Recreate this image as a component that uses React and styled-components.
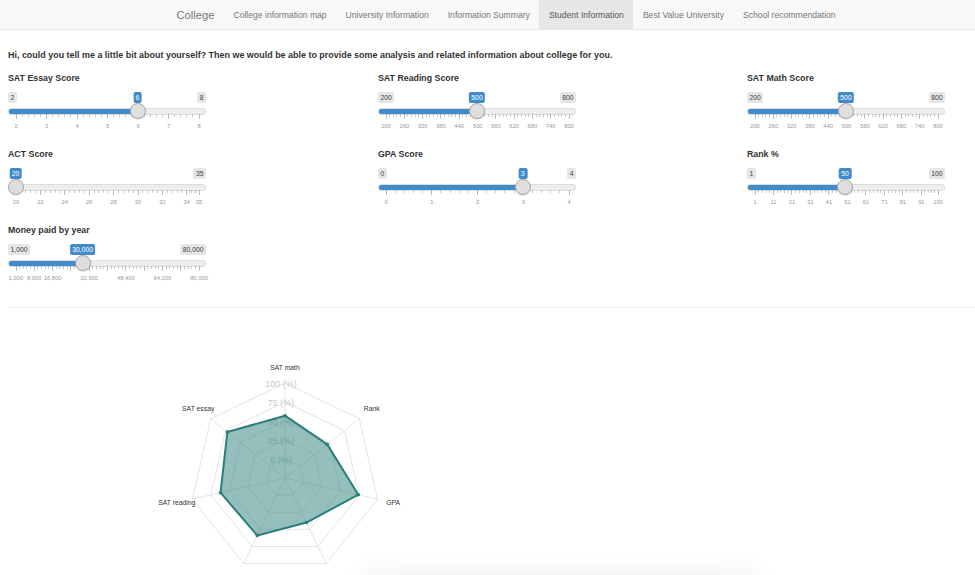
import React from 'react'
import styled, { createGlobalStyle } from 'styled-components'

const GlobalStyle = createGlobalStyle`
    body {
        margin: 0;
        background: #fff;
        font-family: "Liberation Sans", Arial, sans-serif;
        color: #333;
    }
`

// Navbar
const Navbar = styled.nav`
    height: 29px;
    background: #f8f8f8;
    border-bottom: 1px solid #e7e7e7;
    display: flex;
    align-items: stretch;
    padding-left: 167px;
`
const Brand = styled.div`
    font-size: 11.2px;
    color: #777;
    padding: 0 9.5px;
    display: flex;
    align-items: center;
`
const NavLink = styled.div`
    font-size: 8.6px;
    padding: 0 9.5px;
    display: flex;
    align-items: center;
    background: ${p => (p.$active ? '#e7e7e7' : 'transparent')};
    color: ${p => (p.$active ? '#555' : '#777')};
`

// Page
const Main = styled.main`
    padding: 0 8px;
`
const Intro = styled.p`
    margin: 19px 0 11px;
    font-size: 8.95px;
    line-height: 12px;
    font-weight: bold;
    color: #333;
`
const InputGrid = styled.div`
    display: grid;
    grid-template-columns: 370px 369px 1fr;
`
const Group = styled.div`
    height: 76px;
`
const Label = styled.div`
    font-size: 8.8px;
    line-height: 12px;
    font-weight: bold;
    color: #333;
    margin-bottom: 7px;
`
const Rule = styled.hr`
    border: 0;
    border-top: 1px solid #eee;
    margin: 7px -8px 0 0;
`

// Slider (ion.rangeSlider, shiny skin)
const Track = styled.div`
    position: relative;
    width: 198px;
    height: 40px;
`
const EdgeTag = styled.span`
    position: absolute;
    top: 1px;
    ${p => (p.$side === 'left' ? 'left: 0;' : 'right: 0;')}
    font-size: 6.8px;
    line-height: 11px;
    padding: 0 2.5px;
    border-radius: 2px;
    background: rgba(0, 0, 0, 0.1);
    color: #444;
`
const ValueTag = styled.span`
    position: absolute;
    top: 1px;
    transform: translateX(-50%);
    font-size: 6.8px;
    line-height: 11px;
    padding: 0 2.5px;
    border-radius: 2px;
    background: #428bca;
    color: #fff;
    white-space: nowrap;
`
const Line = styled.div`
    position: absolute;
    top: 17px;
    left: 0;
    right: 0;
    height: 5px;
    border-radius: 3px;
    background: #ededed;
    border: 0.5px solid #ddd;
    overflow: hidden;
`
const Fill = styled.div`
    height: 100%;
    background: #428bca;
`
const Handle = styled.div`
    position: absolute;
    top: 12px;
    width: 16px;
    height: 16px;
    margin-left: -8.5px;
    border-radius: 50%;
    box-sizing: border-box;
    background: #dedede;
    border: 1px solid #aaa;
    box-shadow: 0 0.5px 1px rgba(0, 0, 0, 0.15);
`
const Tick = styled.span`
    position: absolute;
    top: 23px;
    width: 1px;
    height: ${p => (p.$big ? '5px' : '2.5px')};
    background: ${p => (p.$big ? '#428bca' : '#999')};
    opacity: 0.5;
`
const TickLabel = styled.span`
    position: absolute;
    top: 31px;
    transform: translateX(-50%);
    font-size: 5.8px;
    line-height: 8px;
    color: #999;
    white-space: nowrap;
`

const fmt = n => n.toLocaleString('en-US')

const Slider = ({ min, max, value, ticks, labels }) => {
    const pos = v => 7.5 + ((v - min) / (max - min)) * 183
    const shown = labels || ticks
    const small = []
    for (let i = 0; i < ticks.length - 1; i++) {
        const a = pos(ticks[i])
        const b = pos(ticks[i + 1])
        const n = b - a < 10 ? 1 : 4
        for (let j = 1; j <= n; j++) small.push(a + ((b - a) / (n + 1)) * j)
    }
    // ion.rangeSlider hides the edge labels that the value label covers
    const valueHalf = (String(fmt(value)).length * 3.8 + 5) / 2
    const minWidth = String(fmt(min)).length * 3.8 + 5
    const maxWidth = String(fmt(max)).length * 3.8 + 5
    const showMin = pos(value) - valueHalf > minWidth + 1
    const showMax = pos(value) + valueHalf < 198 - maxWidth - 1
    return (
        <Track>
            {showMin && <EdgeTag $side="left">{fmt(min)}</EdgeTag>}
            {showMax && <EdgeTag $side="right">{fmt(max)}</EdgeTag>}
            <ValueTag style={{ left: pos(value) }}>{fmt(value)}</ValueTag>
            <Line>
                <Fill style={{ width: pos(value) }} />
            </Line>
            {ticks.map(t => (
                <Tick key={'b' + t} $big style={{ left: pos(t) }} />
            ))}
            {small.map((x, i) => (
                <Tick key={'s' + i} style={{ left: x }} />
            ))}
            {shown.map(t => (
                <TickLabel key={'l' + t} style={{ left: pos(t) + 0.5 }}>{fmt(t)}</TickLabel>
            ))}
            <Handle style={{ left: pos(value) + 0.5 }} />
        </Track>
    )
}

const range = (a, b, s) => {
    const out = []
    for (let v = a; v <= b + 1e-9; v += s) out.push(Math.round(v * 100) / 100)
    return out
}

// Radar chart
const ChartBox = styled.div`
    height: 267px;
    overflow: hidden;
`
const Shadow = styled.div`
    position: fixed;
    left: 370px;
    bottom: -34px;
    width: 380px;
    height: 24px;
    border-radius: 12px;
    background: #ececec;
    box-shadow: 0 0 28px 14px rgba(0, 0, 0, 0.06);
`

const CX = 285
const CY = 478 - 308
const axes = ['SAT math', 'Rank', 'GPA', '', '', 'SAT reading', 'SAT essay']
const data = [0.57, 0.46, 0.74, 0.4, 0.59, 0.62, 0.72]
const angle = k => (-90 + (k * 360) / 7) * (Math.PI / 180)
const pt = (k, r) => [CX + r * Math.cos(angle(k)), CY + r * Math.sin(angle(k))]
const ring = r => axes.map((_, k) => pt(k, r).join(',')).join(' ')

const Radar = () => {
    const points = data.map((v, k) => pt(k, 19 + v * 76))
    return (
        <svg width="975" height="267" style={{ display: 'block', marginLeft: -8 }}>
            {[19, 38, 57, 76, 95].map(r => (
                <polygon key={r} points={ring(r)} fill="none" stroke="#ddd" strokeWidth="0.8" />
            ))}
            {axes.map((_, k) => {
                const [x, y] = pt(k, 95)
                return <line key={k} x1={CX} y1={CY} x2={x} y2={y} stroke="#ddd" strokeWidth="0.8" />
            })}
            {['0', '25', '50', '75', '100'].map((t, i) => (
                <text key={t} x={CX - 4} y={CY - 19 - 19 * i + 4} fontSize="9" fill="#c8c8c8" textAnchor="middle"
                    fontFamily="Liberation Sans, Arial, sans-serif">
                    {t} (%)
                </text>
            ))}
            <polygon
                points={points.map(p => p.join(',')).join(' ')}
                fill="rgba(42,127,123,0.5)"
                stroke="#2a7f7b"
                strokeWidth="2"
                strokeLinejoin="round"
            />
            {points.map(([x, y], i) => (
                <circle key={i} cx={x} cy={y} r="1.8" fill="#2a7f7b" />
            ))}
            {axes.map((a, k) => {
                const [x, y] = pt(k, 111)
                return (
                    <text key={k} x={x} y={y + 2.5} fontSize="6.8" fill="#333" textAnchor="middle"
                        fontFamily="Liberation Sans, Arial, sans-serif">
                        {a}
                    </text>
                )
            })}
        </svg>
    )
}

const App = () => {
    return (
        <>
            <GlobalStyle />
            <Navbar>
                <Brand>College</Brand>
                <NavLink>College information map</NavLink>
                <NavLink>University Information</NavLink>
                <NavLink>Information Summary</NavLink>
                <NavLink $active>Student Information</NavLink>
                <NavLink>Best Value University</NavLink>
                <NavLink>School recommendation</NavLink>
            </Navbar>
            <Main>
                <Intro>
                    Hi, could you tell me a little bit about yourself? Then we would be able to provide some analysis and
                    related information about college for you.
                </Intro>
                <InputGrid>
                    <Group>
                        <Label>SAT Essay Score</Label>
                        <Slider min={2} max={8} value={6} ticks={range(2, 8, 1)} />
                    </Group>
                    <Group>
                        <Label>SAT Reading Score</Label>
                        <Slider min={200} max={800} value={500} ticks={range(200, 800, 60)} />
                    </Group>
                    <Group>
                        <Label>SAT Math Score</Label>
                        <Slider min={200} max={800} value={500} ticks={range(200, 800, 60)} />
                    </Group>
                    <Group>
                        <Label>ACT Score</Label>
                        <Slider min={20} max={35} value={20} ticks={[...range(20, 34, 2), 35]} />
                    </Group>
                    <Group>
                        <Label>GPA Score</Label>
                        <Slider min={0} max={4} value={3} ticks={range(0, 4, 1)} />
                    </Group>
                    <Group>
                        <Label>Rank %</Label>
                        <Slider min={1} max={100} value={50} ticks={[...range(1, 91, 10), 100]} />
                    </Group>
                    <Group>
                        <Label>Money paid by year</Label>
                        <Slider
                            min={1000}
                            max={80000}
                            value={30000}
                            ticks={range(1000, 80000, 7900)}
                            labels={[1000, 8900, 16800, 32600, 48400, 64200, 80000]}
                        />
                    </Group>
                </InputGrid>
                <Rule />
                <ChartBox>
                    <Radar />
                </ChartBox>
            </Main>
            <Shadow />
        </>
    )
}

export default App
